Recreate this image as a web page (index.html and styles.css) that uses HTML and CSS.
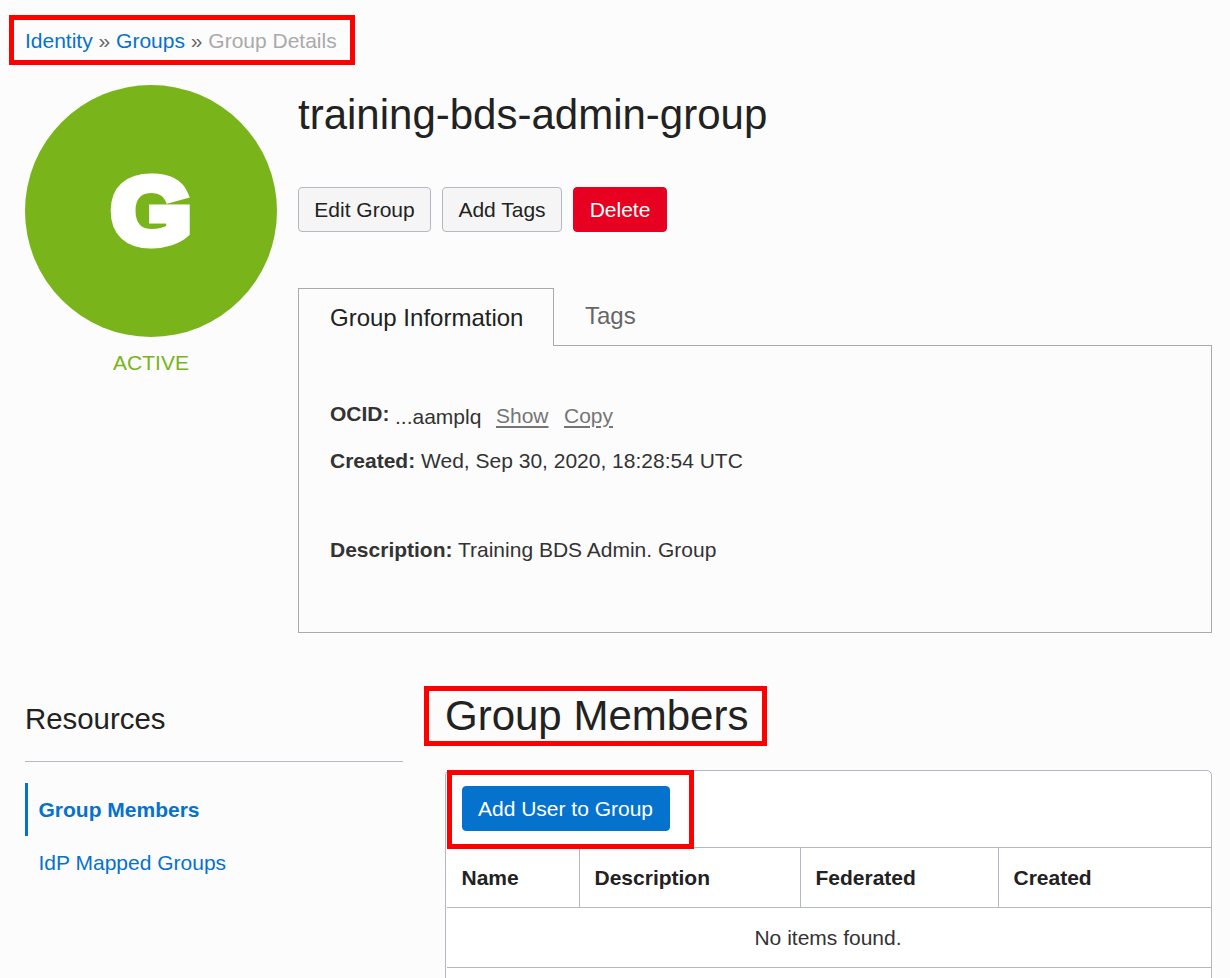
FILE: index.html
```html
<!DOCTYPE html>
<html lang="en">
<head>
<meta charset="utf-8">
<title>Group Details</title>
<link rel="stylesheet" href="styles.css">
</head>
<body>
<div class="page">
  <nav class="breadcrumb">
    <a>Identity</a> » <a>Groups</a> » <span class="current">Group Details</span>
  </nav>
  <section class="summary">
    <aside class="status">
      <div class="avatar"><span class="letter">G</span></div>
      <div class="state">ACTIVE</div>
    </aside>
    <main class="details">
      <h1 class="title">training-bds-admin-group</h1>
      <div class="actions">
        <button class="btn edit">Edit Group</button>
        <button class="btn tags">Add Tags</button>
        <button class="btn delete">Delete</button>
      </div>
      <div class="tabs">
        <div class="tab active">Group Information</div>
        <div class="tab">Tags</div>
      </div>
      <div class="panel">
        <div class="field ocid"><b>OCID:</b><span class="value">...aamplq</span><a class="show">Show</a><a class="copy">Copy</a></div>
        <div class="field created"><b>Created:</b> Wed, Sep 30, 2020, 18:28:54 UTC</div>
        <div class="field"><b>Description:</b> Training BDS Admin. Group</div>
      </div>
    </main>
  </section>
  <section class="lower">
    <aside class="resources">
      <h2 class="resources-title">Resources</h2>
      <a class="item selected">Group Members</a>
      <a class="item">IdP Mapped Groups</a>
    </aside>
    <div class="members">
      <h1 class="title">Group Members</h1>
      <div class="list">
        <div class="toolbar"><button class="btn add">Add User to Group</button></div>
        <div class="row head">
          <div>Name</div><div>Description</div><div>Federated</div><div>Created</div>
        </div>
        <div class="row empty">No items found.</div>
      </div>
    </div>
  </section>
  <div class="mark mark-breadcrumb"></div>
  <div class="mark mark-heading"></div>
  <div class="mark mark-add"></div>
</div>
</body>
</html>
```
FILE: styles.css
```css
* { box-sizing: border-box; }
body {
  margin: 0;
  background: #fcfcfc;
  color: #333;
  font: 21px/24px "Liberation Sans", Arial, sans-serif;
}
.page {
  position: relative;
  height: 978px;
  overflow: hidden;
  padding: 29px 18px 0 25px;
}
a { color: #0572ce; }
.breadcrumb { height: 56px; color: #666; white-space: nowrap; }
.current { color: #aaa; }
.summary { display: flex; gap: 21px; }
.status { width: 252px; text-align: center; }
.avatar {
  height: 252px;
  border-radius: 50%;
  background: #78b41a;
  color: #fff;
  font: 700 93px/252px "Liberation Sans", Arial, sans-serif;
}
.letter { display: inline-block; transform: scaleX(1.1); -webkit-text-stroke: 9px #fff; }
.state { margin-top: 14px; color: #78b41a; }
.details { flex: 1; padding-top: 6px; }
.title { margin: 0; font-weight: 400; font-size: 42px; line-height: 48px; color: #222; }
.actions { display: flex; gap: 11px; margin-top: 48px; }
.btn {
  height: 45px;
  padding: 0;
  border: 1px solid #b3b8c3;
  border-radius: 4px;
  background: #f5f5f5;
  color: #222;
  font: 21px/24px "Liberation Sans", Arial, sans-serif;
  white-space: nowrap;
}
.edit { width: 133px; }
.tags { width: 120px; }
.delete { width: 94px; background: #e7001f; border-color: #e7001f; color: #fff; }
.tabs { display: flex; margin-top: 56px; }
.tab {
  height: 57px;
  padding: 14px 31px 0;
  font-size: 24px;
  line-height: 28px;
  color: #666;
}
.tab.active {
  width: 256px;
  height: 58px;
  margin-bottom: -1px;
  padding: 15px 0 0 31px;
  border: 1px solid #aaa;
  border-bottom: 0;
  background: #fcfcfc;
  color: #222;
  position: relative;
}
.panel { height: 288px; padding: 56px 31px 0; border: 1px solid #aaa; }
.field { white-space: nowrap; }
.ocid { display: flex; margin-bottom: 21px; }
.ocid a { color: #757575; text-decoration: underline; text-underline-offset: 3px; text-decoration-thickness: 2px; padding-top: 2px; }
.value { width: 101px; margin-left: 5.5px; padding-top: 3px; margin-bottom: -3px; }
.show { width: 68px; }
.created { margin-bottom: 65px; }
.lower { display: flex; gap: 42px; padding-top: 59px; }
.resources { width: 378px; padding-top: 10px; }
.resources-title {
  margin: 0 0 21px;
  height: 60px;
  border-bottom: 1px solid #b3b8c3;
  font-weight: 400;
  font-size: 29.4px;
  line-height: 34px;
  color: #222;
}
.item { display: block; height: 53px; padding: 15px 0 0 10.5px; border-left: 3px solid transparent; }
.selected { border-left-color: #0572ce; font-weight: 700; }
.members { flex: 1; }
.list {
  margin-top: 30px;
  height: 230px;
  border: 1px solid #b3b8c3;
  border-radius: 5px 5px 0 0;
  background: #fff;
}
.toolbar { height: 76px; padding: 15px 0 0 16px; }
.add { width: 208px; padding-right: 1px; background: #0572ce; border-color: #0572ce; color: #fff; }
.row { height: 60px; margin-left: 1px; border-top: 1px solid #b3b8c3; }
.head { display: grid; grid-template-columns: 132px 221px 198px 1fr; font-weight: 700; color: #222; }
.head div { padding: 18px 0 0 14.5px; }
.head div + div { border-left: 1px solid #b3b8c3; }
.empty { height: 61px; padding: 18px 2px 0 0; border-bottom: 1px solid #b3b8c3; text-align: center; }
/* Red highlight frames over the highlighted areas */
.mark { position: absolute; border: 5px solid #f00; }
.mark-breadcrumb { left: 9px; top: 15px; width: 346px; height: 50px; }
.mark-heading { left: 424px; top: 686px; width: 343px; height: 60px; }
.mark-add { left: 447px; top: 770px; width: 247px; height: 79px; }
```
